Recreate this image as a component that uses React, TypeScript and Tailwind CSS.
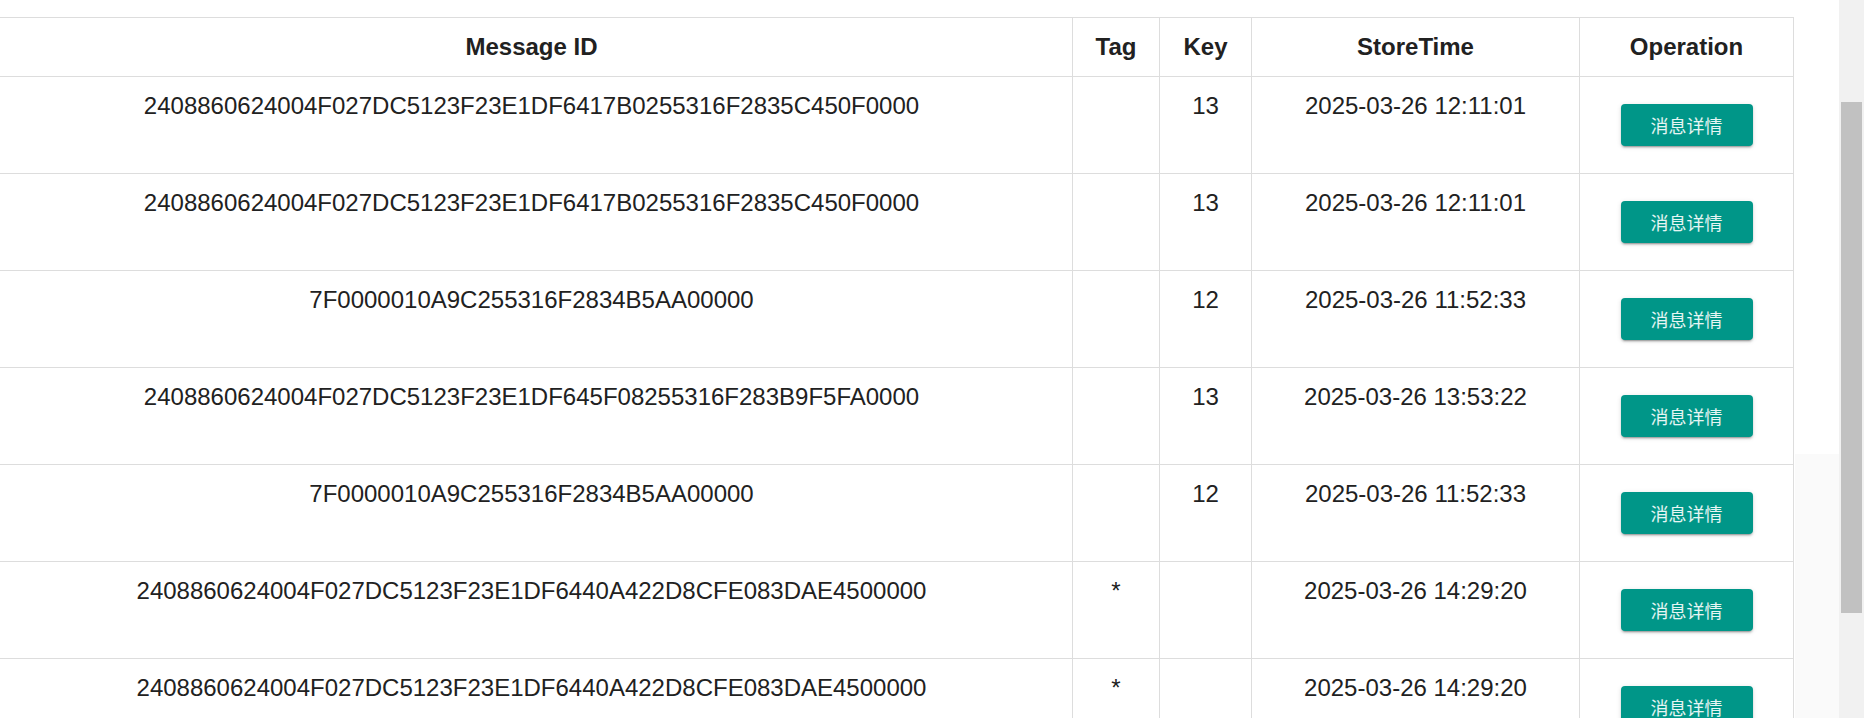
import React from "react";

interface MessageRow {
  msgId: string;
  tag: string;
  keys: string;
  storeTime: string;
}

const rows: MessageRow[] = [
  { msgId: "2408860624004F027DC5123F23E1DF6417B0255316F2835C450F0000", tag: "", keys: "13", storeTime: "2025-03-26 12:11:01" },
  { msgId: "2408860624004F027DC5123F23E1DF6417B0255316F2835C450F0000", tag: "", keys: "13", storeTime: "2025-03-26 12:11:01" },
  { msgId: "7F0000010A9C255316F2834B5AA00000", tag: "", keys: "12", storeTime: "2025-03-26 11:52:33" },
  { msgId: "2408860624004F027DC5123F23E1DF645F08255316F283B9F5FA0000", tag: "", keys: "13", storeTime: "2025-03-26 13:53:22" },
  { msgId: "7F0000010A9C255316F2834B5AA00000", tag: "", keys: "12", storeTime: "2025-03-26 11:52:33" },
  { msgId: "2408860624004F027DC5123F23E1DF6440A422D8CFE083DAE4500000", tag: "*", keys: "", storeTime: "2025-03-26 14:29:20" },
  { msgId: "2408860624004F027DC5123F23E1DF6440A422D8CFE083DAE4500000", tag: "*", keys: "", storeTime: "2025-03-26 14:29:20" },
];

const th = "border border-[#dddddd] h-[59px] p-0 text-center align-middle font-bold leading-[28px]";
const td = "border border-[#dddddd] h-[97px] p-0 pt-[15px] text-center align-top leading-[28px]";

const DetailButton: React.FC = () => (
  <button
    className="w-[132px] h-[42px] rounded-[4px] bg-[#009688] text-[18px] text-white/90 shadow-[0_2px_2px_rgba(0,0,0,0.14),0_3px_1px_-2px_rgba(0,0,0,0.2),0_1px_5px_rgba(0,0,0,0.12)]"
    style={{ fontFamily: '"Noto Sans CJK SC", sans-serif' }}
  >
    消息详情
  </button>
);

const App: React.FC = () => {
  return (
    <div
      className="flex h-[718px] w-[1864px] overflow-hidden bg-white text-[24px] text-[#212121]"
      style={{ fontFamily: '"Liberation Sans", Arial, sans-serif' }}
    >
      <div className="w-[1795px] overflow-hidden pt-[17px]">
        <table className="-ml-[10px] table-fixed border-collapse w-[1803px]">
          <colgroup>
            <col className="w-[1082px]" />
            <col className="w-[87px]" />
            <col className="w-[92px]" />
            <col className="w-[328px]" />
            <col className="w-[214px]" />
          </colgroup>
          <thead>
            <tr>
              <th className={th}>Message ID</th>
              <th className={th}>Tag</th>
              <th className={th}>Key</th>
              <th className={th}>StoreTime</th>
              <th className={th}>Operation</th>
            </tr>
          </thead>
          <tbody>
            {rows.map((row, i) => (
              <tr key={i}>
                <td className={td}>{row.msgId}</td>
                <td className={td}>{row.tag}</td>
                <td className={td}>{row.keys}</td>
                <td className={td}>{row.storeTime}</td>
                <td className="border border-[#dddddd] h-[97px] p-0 text-center align-middle">
                  <DetailButton />
                </td>
              </tr>
            ))}
          </tbody>
        </table>
      </div>
      <div className="flex w-[44px] flex-col">
        <div className="h-[454px] bg-white" />
        <div className="flex-1 bg-[#fafafa]" />
      </div>
      <div className="w-[25px] bg-[#f1f1f1] pt-[102px] pl-[2px]">
        <div className="h-[511px] w-[21px] bg-[#c1c1c1]" />
      </div>
    </div>
  );
};

export default App;
